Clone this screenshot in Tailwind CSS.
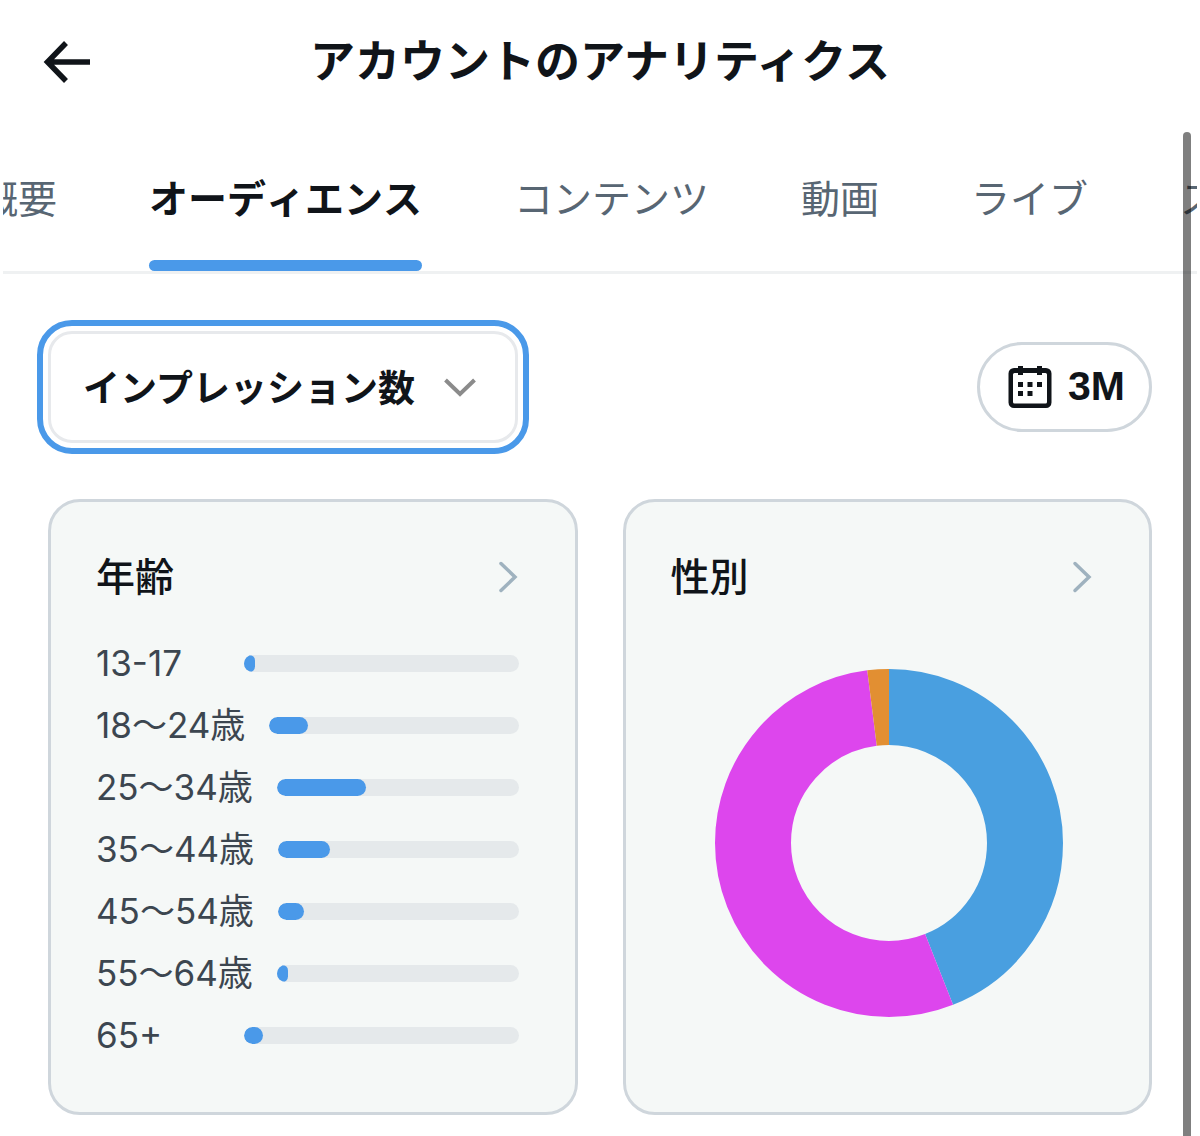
<!DOCTYPE html>
<html lang="ja">
<head>
    <meta charset="UTF-8">
    <meta name="viewport" content="width=device-width, initial-scale=1.0">
    <title>アカウントのアナリティクス</title>
    <script src="https://cdn.jsdelivr.net/npm/@tailwindcss/browser@4"></script>
</head>
<body class="bg-white text-[#101419] font-['Inter','Noto_Sans_CJK_JP',sans-serif] overflow-x-hidden">

    <!-- Header -->
    <header class="grid grid-cols-[48px_1fr_48px] items-center h-[124px] px-[43px]">
        <button type="button" aria-label="戻る" class="w-12 h-12">
            <svg class="w-12 h-12" viewBox="0 0 48 48" fill="none" stroke="currentColor" stroke-width="5.5">
                <path d="M23 5 4.500 24 23 43M4 24H47"/>
            </svg>
        </button>
        <h1 class="text-[45px] leading-[60px] font-bold text-center whitespace-nowrap">アカウントのアナリティクス</h1>
    </header>

    <!-- Tabs -->
    <nav class="mx-[3px] border-b-3 border-[#eff1f2] overflow-hidden">
        <div class="flex gap-[92px] -ml-6 h-[147px] text-[39px] text-[#586673] whitespace-nowrap [font-kerning:none]">
            <a href="#" class="flex items-center pt-1">概要</a>
            <a href="#" class="relative flex items-center pt-1 font-bold text-[#101419]">
                オーディエンス
                <span class="absolute inset-x-0 bottom-0 h-[11px] rounded-full bg-[#4a99e9]"></span>
            </a>
            <a href="#" class="flex items-center pt-1">コンテンツ</a>
            <a href="#" class="flex items-center pt-1">動画</a>
            <a href="#" class="flex items-center pt-1">ライブ</a>
            <a href="#" class="flex items-center pt-1">スペース</a>
        </div>
    </nav>

    <main class="px-12 pt-[57px] pb-[21px]">

        <!-- Filters -->
        <div class="flex justify-between items-center">
            <div class="relative">
                <select aria-label="指標" class="appearance-none w-[470px] h-[112px] pt-1 pl-8 pr-20 border-3 border-[#e7e9ec] rounded-3xl bg-white text-[37px] font-bold outline-6 outline-offset-5 outline-[#4a99e9]">
                    <option>インプレッション数</option>
                    <option>エンゲージメント</option>
                </select>
                <svg class="absolute right-[42px] top-10 w-8 h-8 pointer-events-none" viewBox="0 0 32 32" fill="none" stroke="#8b8b8b" stroke-width="4">
                    <path d="M1.500 9 16 23 30.500 9"/>
                </svg>
            </div>
            <button type="button" class="flex items-center gap-4 h-[90px] pl-7 pr-6 border-3 border-[#cfd6dc] rounded-full text-[41px] font-bold font-['Liberation_Sans',sans-serif]">
                <svg class="w-11 h-11" viewBox="0 0 44 44" fill="currentColor">
                    <path fill-rule="evenodd" d="M10 1h5v2h14V1h5v2h4a5.500 5.500 0 0 1 5.500 5.500v29A5.500 5.500 0 0 1 38 43H6a5.500 5.500 0 0 1-5.500-5.500v-29A5.500 5.500 0 0 1 6 3h4zM6.500 8A1.500 1.500 0 0 0 5 9.500v27.500A1.500 1.500 0 0 0 6.500 38.500h31A1.500 1.500 0 0 0 39 37V9.500A1.500 1.500 0 0 0 37.500 8H34v2h-5V8H15v2h-5V8z"/>
                    <path d="M10 17h5v5h-5zM19.500 17h5v5h-5zM29 17h5v5h-5zM10 26h5v5h-5zM19.500 26h5v5h-5z"/>
                </svg>
                3M
            </button>
        </div>

        <!-- Cards -->
        <div class="grid grid-cols-2 gap-[45px] mt-14">

            <!-- Age -->
            <section class="pl-[45px] pr-[41px] pt-12 pb-[46px] border-3 border-[#cfd6dc] rounded-[32px] bg-[#f5f8f7]">
                <div class="flex justify-between items-center h-[54px] pr-4">
                    <h2 class="text-[39px] font-medium">年齢</h2>
                    <a href="#" aria-label="年齢の詳細">
                        <svg class="w-5 h-8" viewBox="0 0 20 32" fill="none" stroke="#9fb2bf" stroke-width="3.5" stroke-linecap="round">
                            <path d="M3 2.500 17 16 3 29.500"/>
                        </svg>
                    </a>
                </div>
                <ul class="mt-7 pr-[15px] text-[35px] leading-[62px] text-[#3c4650]">
                    <li class="flex items-center gap-6">
                        <span class="min-w-[124px]">13-17</span>
                        <div class="flex-1 h-[17px] rounded-full bg-[#e5e9eb] overflow-hidden"><div class="h-full rounded-full bg-[#4a99e9]" style="width: 4%"></div></div>
                    </li>
                    <li class="flex items-center gap-6">
                        <span class="min-w-[124px]">18～24歳</span>
                        <div class="flex-1 h-[17px] rounded-full bg-[#e5e9eb] overflow-hidden"><div class="h-full rounded-full bg-[#4a99e9]" style="width: 15.5%"></div></div>
                    </li>
                    <li class="flex items-center gap-6">
                        <span class="min-w-[124px]">25～34歳</span>
                        <div class="flex-1 h-[17px] rounded-full bg-[#e5e9eb] overflow-hidden"><div class="h-full rounded-full bg-[#4a99e9]" style="width: 36.8%"></div></div>
                    </li>
                    <li class="flex items-center gap-6">
                        <span class="min-w-[124px]">35～44歳</span>
                        <div class="flex-1 h-[17px] rounded-full bg-[#e5e9eb] overflow-hidden"><div class="h-full rounded-full bg-[#4a99e9]" style="width: 21.4%"></div></div>
                    </li>
                    <li class="flex items-center gap-6">
                        <span class="min-w-[124px]">45～54歳</span>
                        <div class="flex-1 h-[17px] rounded-full bg-[#e5e9eb] overflow-hidden"><div class="h-full rounded-full bg-[#4a99e9]" style="width: 10.8%"></div></div>
                    </li>
                    <li class="flex items-center gap-6">
                        <span class="min-w-[124px]">55～64歳</span>
                        <div class="flex-1 h-[17px] rounded-full bg-[#e5e9eb] overflow-hidden"><div class="h-full rounded-full bg-[#4a99e9]" style="width: 4.6%"></div></div>
                    </li>
                    <li class="flex items-center gap-6">
                        <span class="min-w-[124px]">65+</span>
                        <div class="flex-1 h-[17px] rounded-full bg-[#e5e9eb] overflow-hidden"><div class="h-full rounded-full bg-[#4a99e9]" style="width: 6.8%"></div></div>
                    </li>
                </ul>
            </section>

            <!-- Gender -->
            <section class="pl-[45px] pr-[41px] pt-12 pb-[46px] border-3 border-[#cfd6dc] rounded-[32px] bg-[#f5f8f7]">
                <div class="flex justify-between items-center h-[54px] pr-4">
                    <h2 class="text-[39px] font-medium">性別</h2>
                    <a href="#" aria-label="性別の詳細">
                        <svg class="w-5 h-8" viewBox="0 0 20 32" fill="none" stroke="#9fb2bf" stroke-width="3.5" stroke-linecap="round">
                            <path d="M3 2.500 17 16 3 29.500"/>
                        </svg>
                    </a>
                </div>
                <svg class="mx-auto mt-[65px] w-[348px] h-[348px]" viewBox="0 0 348 348" fill="none" stroke-width="76">
                    <g transform="rotate(-90 174 174)">
                        <circle cx="174" cy="174" r="136" stroke="#499fe0" pathLength="100" stroke-dasharray="44 56"/>
                        <circle cx="174" cy="174" r="136" stroke="#dd46ed" pathLength="100" stroke-dasharray="54 46" stroke-dashoffset="-44"/>
                        <circle cx="174" cy="174" r="136" stroke="#e28f32" pathLength="100" stroke-dasharray="2 98" stroke-dashoffset="-98"/>
                    </g>
                </svg>
            </section>
        </div>
    </main>

    <!-- Scroll indicator -->
    <div class="fixed right-[9px] top-[132px] bottom-0 w-2 rounded-t-full bg-black/50"></div>

</body>
</html>
